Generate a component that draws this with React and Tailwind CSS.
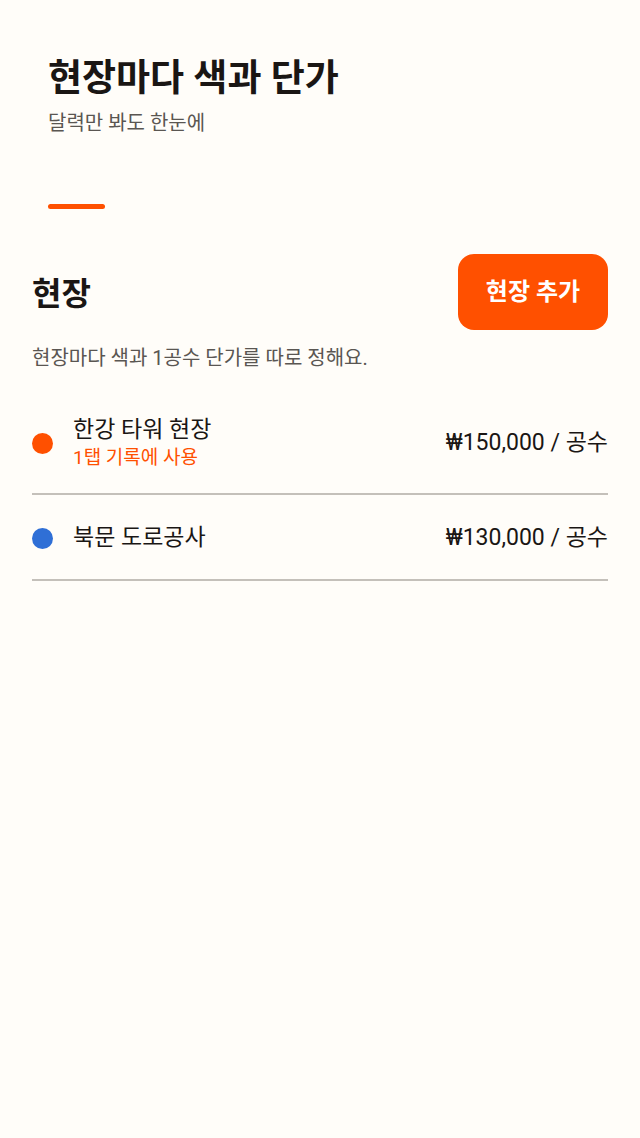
import React from "react";

const sites = [
  { name: "한강 타워 현장", color: "bg-[#ff5000]", price: "₩150,000 / 공수", note: "1탭 기록에 사용" },
  { name: "북문 도로공사", color: "bg-[#2f6fd6]", price: "₩130,000 / 공수" },
];

export default function App() {
  return (
    <div
      className="min-h-[1138px] w-[640px] bg-[#fffdf9] text-[#1a1614]"
      style={{ fontFamily: "Roboto, 'Noto Sans CJK KR', sans-serif" }}
    >
      {/* Header */}
      <div className="px-12 pt-[54px]">
        <h1 className="text-[37px] font-bold leading-[50px]">현장마다 색과 단가</h1>
        <p className="mt-[5px] text-[20px] leading-[28px] text-[#5a5652]">달력만 봐도 한눈에</p>
        <div className="mt-[67px] h-[5px] w-[57px] rounded-full bg-[#ff5000]" />
      </div>

      {/* Sites */}
      <div className="px-8 pt-[45px]">
        <div className="flex items-center justify-between">
          <h2 className="pt-[3px] text-[32px] font-semibold leading-[44px]">현장</h2>
          <button className="h-[76px] w-[150px] rounded-[16px] bg-[#ff5000] text-[24px] font-semibold text-white">
            현장 추가
          </button>
        </div>
        <p className="mt-[14px] text-[20px] leading-[28px] text-[#5a5652]">
          현장마다 색과 1공수 단가를 따로 정해요.
        </p>

        <div className="mt-[16px]">
          {sites.map((s) => (
            <div
              key={s.name}
              className={`flex items-center justify-between border-b-2 border-[#c4c0ba] ${s.note ? "h-[107px] pt-[5px]" : "h-[86px] pt-[2px]"}`}
            >
              <div className="flex items-center gap-5">
                <span className={`h-[21px] w-[21px] rounded-full ${s.color}`} />
                <div>
                  <div className="text-[23px] leading-[30px]">{s.name}</div>
                  {s.note && <div className="text-[19px] leading-[26px] text-[#ff5000]">{s.note}</div>}
                </div>
              </div>
              <div className="text-[23px] leading-[30px]">{s.price}</div>
            </div>
          ))}
        </div>
      </div>
    </div>
  );
}
